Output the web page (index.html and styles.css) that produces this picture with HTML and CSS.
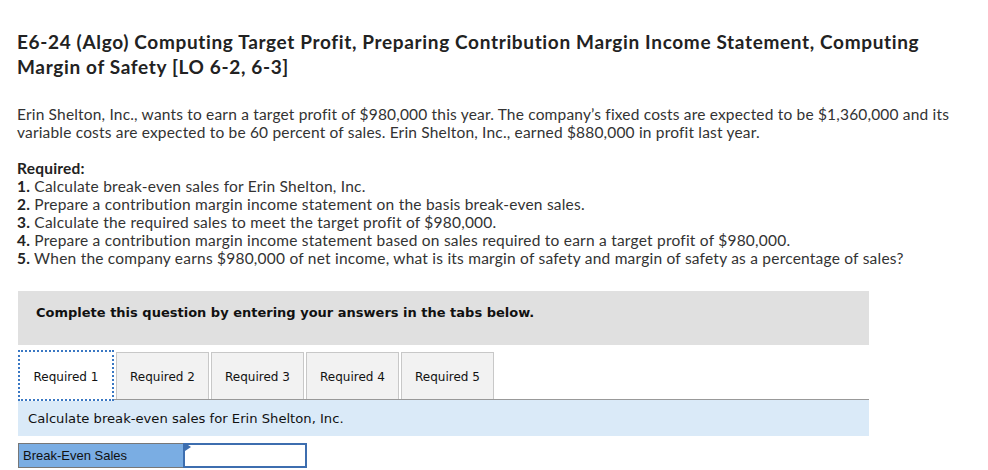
FILE: index.html
```html
<!DOCTYPE html>
<html>
<head>
<meta charset="utf-8">
<link rel="stylesheet" href="styles.css">
</head>
<body>
<div class="page">
  <h1 class="title">E6-24 (Algo) Computing Target Profit, Preparing Contribution Margin Income Statement, Computing Margin of Safety [LO 6-2, 6-3]</h1>
  <p class="intro">Erin Shelton, Inc., wants to earn a target profit of $980,000 this year. The company’s fixed costs are expected to be $1,360,000 and its variable costs are expected to be 60 percent of sales. Erin Shelton, Inc., earned $880,000 in profit last year.</p>
  <div class="required">
    <div class="req-head">Required:</div>
    <div><b>1.</b> Calculate break-even sales for Erin Shelton, Inc.</div>
    <div><b>2.</b> Prepare a contribution margin income statement on the basis break-even sales.</div>
    <div><b>3.</b> Calculate the required sales to meet the target profit of $980,000.</div>
    <div><b>4.</b> Prepare a contribution margin income statement based on sales required to earn a target profit of $980,000.</div>
    <div><b>5.</b> When the company earns $980,000 of net income, what is its margin of safety and margin of safety as a percentage of sales?</div>
  </div>
  <div class="panel">
    <div class="notice">Complete this question by entering your answers in the tabs below.</div>
    <div class="tabs">
      <div class="tab active">Required 1</div>
      <div class="tab">Required 2</div>
      <div class="tab">Required 3</div>
      <div class="tab">Required 4</div>
      <div class="tab">Required 5</div>
    </div>
    <div class="prompt">Calculate break-even sales for Erin Shelton, Inc.</div>
    <div class="answer">
      <div class="label">Break-Even Sales</div>
      <div class="input"><span class="flag"></span></div>
    </div>
  </div>
</div>
</body>
</html>
```

FILE: styles.css
```css
html, body { margin: 0; padding: 0; background: #fff; }
.page {
  padding: 30px 0 0 17px;
  width: 945px;
}
.title {
  font-family: "Lato", "Liberation Sans", sans-serif;
  font-weight: 700;
  font-size: 19px;
  letter-spacing: 0.65px;
  line-height: 24.5px;
  color: #222;
  margin: 0 0 26px 0;
  width: 920px;
}
.intro {
  font-family: "Lato", "Liberation Sans", sans-serif;
  font-size: 15.5px;
  letter-spacing: 0.18px;
  line-height: 18px;
  color: #333;
  margin: 0 0 18px 0;
}
.required {
  font-family: "Lato", "Liberation Sans", sans-serif;
  font-size: 15.5px;
  letter-spacing: 0.22px;
  line-height: 18px;
  color: #333;
}
.required b, .req-head { font-weight: 700; color: #222; }
.panel {
  margin: 24px 0 0 1px;
  width: 851px;
}
.notice {
  background: #e0e0e0;
  height: 54px;
  box-sizing: border-box;
  padding: 13px 18px 0;
  line-height: 18px;
  font-family: "DejaVu Sans", Verdana, sans-serif;
  font-weight: 700;
  font-size: 13px;
  color: #111;
}
.tabs {
  display: flex;
  gap: 2px;
  margin-top: 7px;
  border-bottom: 1px solid #999;
  height: 47px;
}
.tab {
  width: 93px;
  box-sizing: border-box;
  border: 1px solid #c8c8c8;
  border-bottom: none;
  background: #f2f2f2;
  font-family: "DejaVu Sans", Verdana, sans-serif;
  font-size: 12px;
  color: #111;
  display: flex;
  align-items: center;
  justify-content: center;
  padding-top: 2px;
}
.tab.active {
  background: #fff;
  width: 96px;
  border: 2px dotted #3a78c3;
  margin-top: -2px;
  height: 51px;
  position: relative;
  z-index: 1;
}
.prompt {
  background: #daeaf8;
  height: 36px;
  box-sizing: border-box;
  padding: 1px 10px 0;
  display: flex;
  align-items: center;
  font-family: "DejaVu Sans", Verdana, sans-serif;
  font-size: 13.15px;
  color: #111;
}
.answer {
  display: flex;
  margin-top: 7px;
  height: 25px;
}
.label {
  width: 165px;
  box-sizing: border-box;
  background: #7aade3;
  border: 1px solid #777;
  border-right: none;
  padding-left: 4px;
  font-family: "Liberation Sans", Arial, sans-serif;
  font-size: 13px;
  color: #111;
  display: flex;
  align-items: center;
}
.input {
  width: 124px;
  box-sizing: border-box;
  border: 2px solid #3d6eaf;
  background: #fff;
  position: relative;
}
.flag {
  position: absolute;
  left: 0;
  top: -2px;
  width: 0;
  height: 0;
  border-top: 4px solid transparent;
  border-bottom: 4px solid transparent;
  border-left: 6px solid #3d6eaf;
}
```
